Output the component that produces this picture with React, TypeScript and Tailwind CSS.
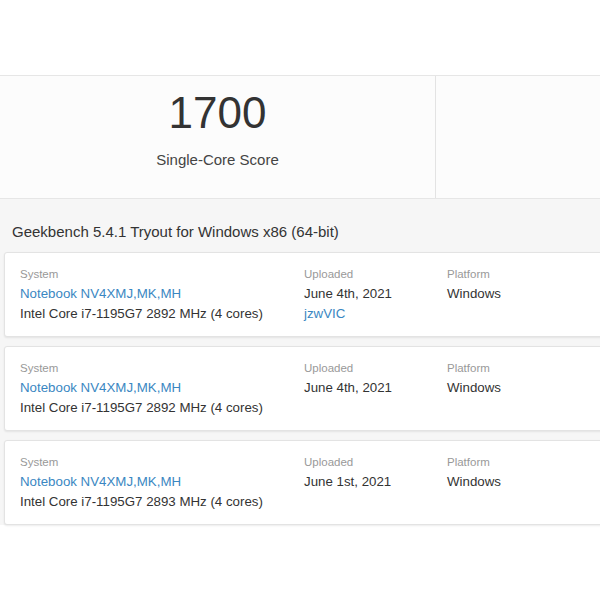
import React from "react";

type Result = {
  system: string;
  cpu: string;
  uploaded: string;
  platform: string;
  id?: string;
};

const results: Result[] = [
  {
    system: "Notebook NV4XMJ,MK,MH",
    cpu: "Intel Core i7-1195G7 2892 MHz (4 cores)",
    uploaded: "June 4th, 2021",
    platform: "Windows",
    id: "jzwVIC",
  },
  {
    system: "Notebook NV4XMJ,MK,MH",
    cpu: "Intel Core i7-1195G7 2892 MHz (4 cores)",
    uploaded: "June 4th, 2021",
    platform: "Windows",
  },
  {
    system: "Notebook NV4XMJ,MK,MH",
    cpu: "Intel Core i7-1195G7 2893 MHz (4 cores)",
    uploaded: "June 1st, 2021",
    platform: "Windows",
  },
];

const ResultCard = ({ result }: { result: Result }) => (
  <div className="flex w-[640px] rounded-[3px] border border-[#e3e3e3] bg-white pt-[11px] pb-[12px] pl-[15px] shadow-[0_1px_2px_rgba(0,0,0,0.08)]">
    <div className="w-[284px]">
      <div className="text-[11.5px] leading-[20px] text-[#999]">System</div>
      <div className="text-[13.3px] leading-[20px] text-[#3a87c2]">{result.system}</div>
      <div className="text-[13.3px] leading-[20px] text-[#333]">{result.cpu}</div>
    </div>
    <div className="w-[143px]">
      <div className="text-[11.5px] leading-[20px] text-[#999]">Uploaded</div>
      <div className="text-[13.3px] leading-[20px] text-[#333]">{result.uploaded}</div>
      {result.id && (
        <div className="text-[13.3px] leading-[20px] text-[#3a87c2]">{result.id}</div>
      )}
    </div>
    <div>
      <div className="text-[11.5px] leading-[20px] text-[#999]">Platform</div>
      <div className="text-[13.3px] leading-[20px] text-[#333]">{result.platform}</div>
    </div>
  </div>
);

const App = () => {
  return (
    <div className="h-[600px] w-[600px] overflow-hidden bg-white font-['Liberation_Sans',Arial,sans-serif]">
      <div className="h-[75px]" />

      {/* score panel */}
      <div className="flex h-[124px] border-t border-b border-[#e6e6e6] bg-[#fcfcfc]">
        <div className="flex w-[436px] flex-col items-center border-r border-[#e3e3e3] pt-[12px]">
          <div className="text-[44px] leading-[50px] text-[#333]">1700</div>
          <div className="mt-[12px] text-[15px] leading-[20px] text-[#444]">Single-Core Score</div>
        </div>
        <div className="flex-1" />
      </div>

      {/* results */}
      <div className="h-[326px] bg-[#f6f6f6] pl-[4px] pt-[22px]">
        <div className="pl-[8px] text-[15px] leading-[22px] text-[#333]">
          Geekbench 5.4.1 Tryout for Windows x86 (64-bit)
        </div>
        <div className="mt-[9px] flex flex-col gap-[9px]">
          {results.map((r, i) => (
            <ResultCard key={i} result={r} />
          ))}
        </div>
      </div>
    </div>
  );
};

export default App;
